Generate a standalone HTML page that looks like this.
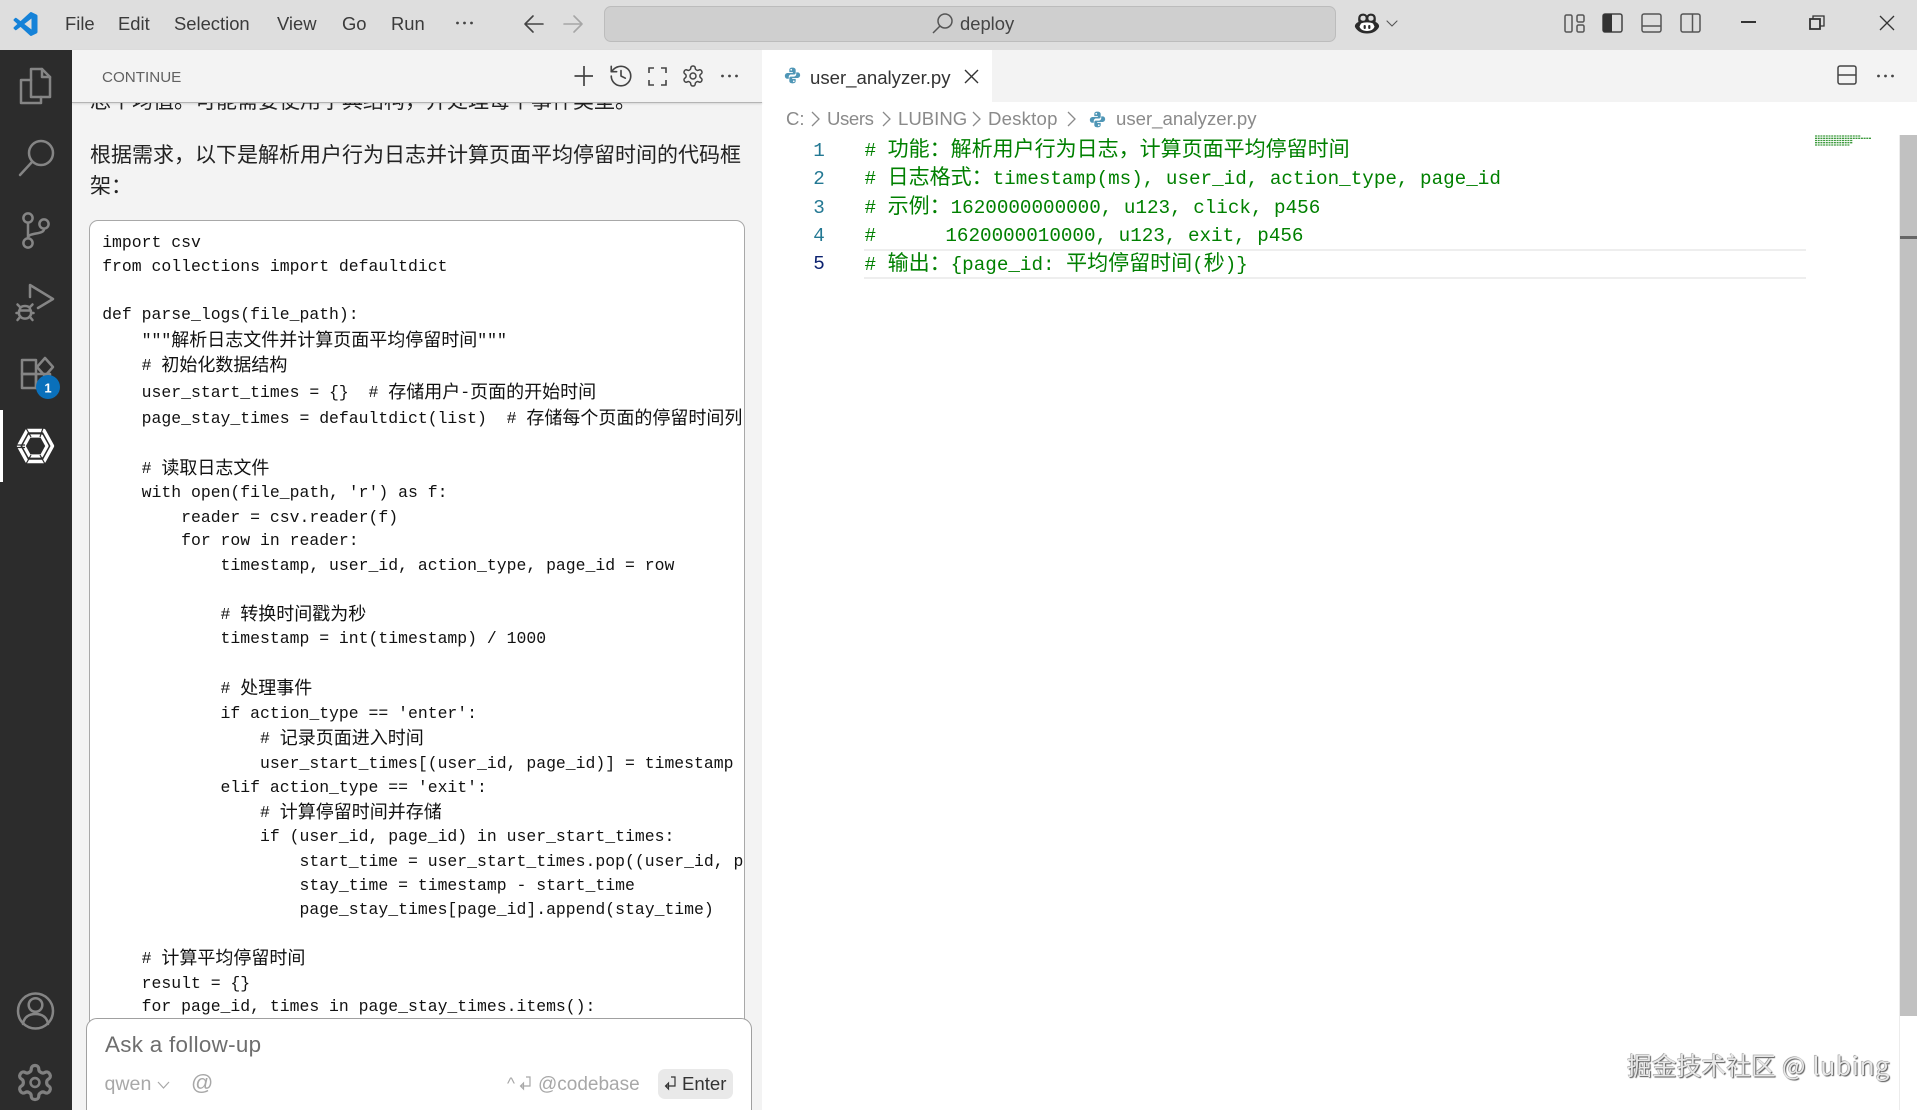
<!DOCTYPE html>
<html lang="zh-CN">
<head>
<meta charset="utf-8">
<title>user_analyzer.py</title>
<style>
html,body{margin:0;padding:0;width:1917px;height:1110px;overflow:hidden;background:#fff;}
body{position:relative;font-family:"Liberation Sans","Noto Sans CJK SC",sans-serif;color:#222;}
.a{position:absolute;white-space:pre;}
svg{position:absolute;overflow:visible;}
#title{position:absolute;left:0;top:0;width:1917px;height:50px;background:#dedede;}
.m{position:absolute;top:11px;line-height:26px;font-size:18.4px;color:#3b3b3b;}
#activity{position:absolute;left:0;top:50px;width:72px;height:1060px;background:#2c2c2c;}
#side{position:absolute;left:72px;top:50px;width:690px;height:1060px;background:#f3f3f3;overflow:hidden;}
#tabs{position:absolute;left:762px;top:50px;width:1155px;height:52px;background:#f3f3f3;}
#tab{position:absolute;left:762px;top:50px;width:230px;height:52px;background:#fff;}
#code{position:absolute;left:89px;top:220px;width:654px;height:900px;background:#fff;border:1px solid #a8a8a8;border-radius:9px;overflow:hidden;}
.l{position:absolute;left:12.2px;margin-top:.8px;line-height:24px;height:24px;white-space:pre;font-family:"Liberation Mono","Noto Sans CJK SC",monospace;font-size:16.45px;color:#111;}
.l i,.e i{font-style:normal;line-height:0;font-family:"Noto Sans CJK SC","Liberation Sans",sans-serif;}
.l i{font-size:18px;position:relative;top:1.2px;}
.e{position:absolute;left:864.5px;line-height:26px;height:26px;white-space:pre;font-family:"Liberation Mono","Noto Sans CJK SC",monospace;font-size:19.25px;color:#008000;}
.e i{font-size:21px;}
.n{position:absolute;left:808px;width:22px;text-align:center;line-height:26px;font-family:"Liberation Mono",monospace;font-size:19.25px;color:#237893;}
.b{position:absolute;top:107px;line-height:24px;font-size:18.6px;color:#8a8a8a;white-space:pre;}
.t{position:absolute;left:90px;font-size:21px;line-height:30px;color:#222;white-space:pre;font-family:"Noto Sans CJK SC","Liberation Sans",sans-serif;}
#input{position:absolute;left:86px;top:1018px;width:664px;height:110px;background:#fff;border:1px solid #a0a0a0;border-radius:11px;}
.g{fill:none;stroke:#858585;stroke-width:2.5;stroke-linecap:round;stroke-linejoin:round;}
.d{fill:none;stroke:#444;stroke-width:1.6;stroke-linecap:round;stroke-linejoin:round;}
</style>
</head>
<body>

<div id="title"></div>
<!-- VS Code logo -->
<svg style="left:13px;top:12px" width="25" height="24" viewBox="0 0 24 24"><path fill="#1582d8" d="M23.15 2.587L18.21.21a1.494 1.494 0 0 0-1.705.29l-9.46 8.63-4.12-3.128a.999.999 0 0 0-1.276.057L.327 7.261A1 1 0 0 0 .326 8.74L3.899 12 .326 15.26a1 1 0 0 0 .001 1.479L1.65 17.94a.999.999 0 0 0 1.276.057l4.12-3.128 9.46 8.63a1.492 1.492 0 0 0 1.704.29l4.942-2.377A1.5 1.5 0 0 0 24 20.06V3.939a1.5 1.5 0 0 0-.85-1.352zm-5.146 14.861L10.826 12l7.178-5.448v10.896z"/></svg>
<div class="m" style="left:65px">File</div>
<div class="m" style="left:118px">Edit</div>
<div class="m" style="left:174px">Selection</div>
<div class="m" style="left:277px">View</div>
<div class="m" style="left:342px">Go</div>
<div class="m" style="left:391px">Run</div>
<svg style="left:455px;top:20px" width="20" height="6"><circle cx="2.5" cy="3" r="1.4" fill="#444"/><circle cx="9.5" cy="3" r="1.4" fill="#444"/><circle cx="16.5" cy="3" r="1.4" fill="#444"/></svg>
<svg style="left:524px;top:14px" width="20" height="20" viewBox="0 0 20 20"><path class="d" d="M1 10H19M9 2L1 10L9 18"/></svg>
<svg style="left:563px;top:14px" width="20" height="20" viewBox="0 0 20 20"><path class="d" style="stroke:#a6a6a6" d="M1 10H19M11 2L19 10L11 18"/></svg>
<div style="position:absolute;left:604px;top:6px;width:730px;height:34px;background:#cfcfcf;border:1px solid #bcbcbc;border-radius:7px;"></div>
<svg style="left:932px;top:13px" width="21" height="21" viewBox="0 0 21 21"><circle cx="13" cy="8" r="7" fill="none" stroke="#555" stroke-width="1.5"/><path d="M8 13L1 20" stroke="#555" stroke-width="1.5" fill="none"/></svg>
<div class="a" style="left:960px;top:11px;line-height:26px;font-size:18.4px;color:#444">deploy</div>
<!-- Copilot -->
<svg style="left:1354px;top:13px" width="26" height="21" viewBox="0 0 26 21">
<path fill="#2b2b2b" d="M5 2.5C6 .5 10 0 12 1.5L13 2.5L14 1.5C16 0 20 .5 21 2.5C22 4 22 7 21.5 9C24 10 25.5 12 25 14C24 16 22 18 20 19C17 21 9 21 6 19C4 18 2 16 1 14C.5 12 2 10 4.5 9C4 7 4 4 5 2.5Z"/>
<path fill="#dedede" d="M7 3.5C8 2.5 10.5 2.5 11.2 3.5C12 5 11.6 7 10.5 7.5C9 8 7 7.6 6.6 6.5C6.3 5.5 6.4 4.2 7 3.5Z"/>
<path fill="#dedede" d="M19 3.5C18 2.5 15.5 2.5 14.8 3.5C14 5 14.4 7 15.5 7.5C17 8 19 7.6 19.4 6.5C19.7 5.5 19.6 4.2 19 3.5Z"/>
<path fill="#fff" d="M7 10.5C10 9 16 9 19 10.5L20.5 13.5C20 16 17 18 13 18C9 18 6 16 5.5 13.5Z"/>
<rect x="9.6" y="12" width="2.2" height="4" rx="1" fill="#2b2b2b"/><rect x="14.2" y="12" width="2.2" height="4" rx="1" fill="#2b2b2b"/>
</svg>
<svg style="left:1386px;top:20px" width="12" height="7" viewBox="0 0 12 7"><path class="d" style="stroke-width:1.1;stroke:#555" d="M1 1L6 6L11 1"/></svg>
<!-- layout icons -->
<svg style="left:1564px;top:14px" width="21" height="19" viewBox="0 0 21 19"><rect x="1" y="1" width="7" height="17" rx="1.5" fill="none" stroke="#555" stroke-width="1.5"/><rect x="13" y="1" width="7" height="7" rx="1.5" fill="none" stroke="#555" stroke-width="1.5"/><rect x="13" y="11" width="7" height="7" rx="1.5" fill="none" stroke="#555" stroke-width="1.5"/></svg>
<svg style="left:1602px;top:13px" width="21" height="20" viewBox="0 0 21 20"><rect x="1" y="1" width="19" height="18" rx="2" fill="none" stroke="#444" stroke-width="1.5"/><path d="M3 1H10V19H3C2 19 1 18 1 17V3C1 2 2 1 3 1Z" fill="#333"/></svg>
<svg style="left:1641px;top:13px" width="21" height="20" viewBox="0 0 21 20"><rect x="1" y="1" width="19" height="18" rx="2" fill="none" stroke="#555" stroke-width="1.5"/><path d="M1 13H20" stroke="#555" stroke-width="1.5"/></svg>
<svg style="left:1680px;top:13px" width="21" height="20" viewBox="0 0 21 20"><rect x="1" y="1" width="19" height="18" rx="2" fill="none" stroke="#555" stroke-width="1.5"/><path d="M12.5 1V19" stroke="#555" stroke-width="1.5"/></svg>
<div style="position:absolute;left:1741px;top:21px;width:15px;height:2px;background:#333"></div>
<svg style="left:1809px;top:15px" width="16" height="15" viewBox="0 0 16 15"><rect x="1" y="4" width="10" height="10" fill="none" stroke="#333" stroke-width="1.8"/><path d="M4 3.5V1H15V11H11.5" fill="none" stroke="#333" stroke-width="1.3"/></svg>
<svg style="left:1879px;top:15px" width="16" height="16" viewBox="0 0 16 16"><path d="M1 1L15 15M15 1L1 15" stroke="#333" stroke-width="1.3" fill="none"/></svg>

<!-- Activity bar -->
<div id="activity"></div>
<svg style="left:0;top:0" width="72" height="1110" viewBox="0 0 72 1110">
<path class="g" d="M31 69H42L50 77V97H31Z"/>
<path class="g" d="M42 69V77H50"/>
<path class="g" d="M31 80H21V103H41V97"/>
<circle class="g" cx="41" cy="153" r="12"/><path class="g" d="M32 162L20 175"/>
<circle class="g" cx="28" cy="218" r="4.6"/><circle class="g" cx="28" cy="243" r="4.6"/><circle class="g" cx="44" cy="224" r="4.6"/>
<path class="g" d="M28 223V238M44 229C44 235 28 232 28 238"/>
<path class="g" d="M30 297V285L53 299L38 308"/>
<path class="g" d="M20 309C20 305 30 305 30 309C31.5 311 31.5 315 30 316C28 319.5 22 319.5 20 316C18.5 315 18.5 311 20 309ZM20 310.5H30"/>
<path class="g" d="M17.5 304.5L20 307M32.5 304.5L30 307M16.5 313H19M33.5 313H31M17.5 320L20 317M32.5 320L30 317"/>
<rect class="g" x="22" y="360" width="14" height="14"/><rect class="g" x="22" y="374" width="14" height="14"/><rect class="g" x="36" y="374" width="14" height="14"/>
<path class="g" d="M45 358L53 367L45 376L37 367Z"/>
<circle cx="48" cy="387" r="12" fill="#0a70bb"/>
<text x="48" y="392.5" text-anchor="middle" font-family="Liberation Sans" font-weight="700" font-size="13" fill="#fff">1</text>
<rect x="0" y="410" width="3" height="72" fill="#fff"/>
<path d="M27 430.5H44L52.5 446L44 461.5H27L18.5 446Z" fill="none" stroke="#fff" stroke-width="3.4" stroke-linejoin="round"/>
<path d="M29.5 436H41.5L47 446L41.5 456H29.5L24 446Z" fill="none" stroke="#fff" stroke-width="3.2" stroke-linejoin="round"/>
<path d="M26 428L31 437M43 428L40 437M16 445H25M16 447.5H25M26 464L31 455M45 464L40 455" stroke="#2c2c2c" stroke-width="1.2"/>
<circle class="g" cx="35.5" cy="1011" r="17.5"/><circle class="g" cx="35.5" cy="1005" r="6.8"/><path class="g" d="M23 1024C24 1017 29 1014 35.5 1014C42 1014 47 1017 48 1024"/>
<g transform="translate(14.6,1062.1) scale(1.7)">
<path fill="none" stroke="#808080" stroke-width="1.9" stroke-linejoin="round" d="M12.22 2h-.44a2 2 0 0 0-2 2v.18a2 2 0 0 1-1 1.73l-.43.25a2 2 0 0 1-2 0l-.15-.08a2 2 0 0 0-2.73.73l-.22.38a2 2 0 0 0 .73 2.73l.15.1a2 2 0 0 1 1 1.72v.51a2 2 0 0 1-1 1.74l-.15.09a2 2 0 0 0-.73 2.73l.22.38a2 2 0 0 0 2.73.73l.15-.08a2 2 0 0 1 2 0l.43.25a2 2 0 0 1 1 1.73V20a2 2 0 0 0 2 2h.44a2 2 0 0 0 2-2v-.18a2 2 0 0 1 1-1.73l.43-.25a2 2 0 0 1 2 0l.15.08a2 2 0 0 0 2.73-.73l.22-.39a2 2 0 0 0-.73-2.73l-.15-.08a2 2 0 0 1-1-1.74v-.5a2 2 0 0 1 1-1.74l.15-.09a2 2 0 0 0 .73-2.73l-.22-.38a2 2 0 0 0-2.73-.73l-.15.08a2 2 0 0 1-2 0l-.43-.25a2 2 0 0 1-1-1.73V4a2 2 0 0 0-2-2z"/>
<circle cx="12" cy="12" r="2.6" fill="none" stroke="#808080" stroke-width="1.5"/>
</g>
</svg>

<!-- Sidebar -->
<div id="side"></div>
<div class="t" style="top:85px">总个均值。可能需要使用字典结构，并处理每个事件类型。</div>
<div class="t" style="top:139px">根据需求，以下是解析用户行为日志并计算页面平均停留时间的代码框</div>
<div class="t" style="top:170px">架：</div>

<div id="code">
<div class="l" style="top:9px">import csv</div>
<div class="l" style="top:33.5px">from collections import defaultdict</div>
<div class="l" style="top:81px">def parse_logs(file_path):</div>
<div class="l" style="top:107px">    """<i>解析日志文件并计算页面平均停留时间</i>"""</div>
<div class="l" style="top:132.5px">    # <i>初始化数据结构</i></div>
<div class="l" style="top:159.5px">    user_start_times = {}  # <i>存储用户</i>-<i>页面的开始时间</i></div>
<div class="l" style="top:185px">    page_stay_times = defaultdict(list)  # <i>存储每个页面的停留时间列</i></div>
<div class="l" style="top:235px">    # <i>读取日志文件</i></div>
<div class="l" style="top:259.7px">    with open(file_path, 'r') as f:</div>
<div class="l" style="top:284px">        reader = csv.reader(f)</div>
<div class="l" style="top:307px">        for row in reader:</div>
<div class="l" style="top:332px">            timestamp, user_id, action_type, page_id = row</div>
<div class="l" style="top:381px">            # <i>转换时间戳为秒</i></div>
<div class="l" style="top:405px">            timestamp = int(timestamp) / 1000</div>
<div class="l" style="top:455px">            # <i>处理事件</i></div>
<div class="l" style="top:480px">            if action_type == 'enter':</div>
<div class="l" style="top:505px">                # <i>记录页面进入时间</i></div>
<div class="l" style="top:530px">                user_start_times[(user_id, page_id)] = timestamp</div>
<div class="l" style="top:554px">            elif action_type == 'exit':</div>
<div class="l" style="top:579px">                # <i>计算停留时间并存储</i></div>
<div class="l" style="top:603px">                if (user_id, page_id) in user_start_times:</div>
<div class="l" style="top:628px">                    start_time = user_start_times.pop((user_id, page_id))</div>
<div class="l" style="top:652px">                    stay_time = timestamp - start_time</div>
<div class="l" style="top:676.5px">                    page_stay_times[page_id].append(stay_time)</div>
<div class="l" style="top:725px">    # <i>计算平均停留时间</i></div>
<div class="l" style="top:750px">    result = {}</div>
<div class="l" style="top:773px">    for page_id, times in page_stay_times.items():</div>
</div>

<!-- Sidebar header (covers scrolled text) -->
<div style="position:absolute;left:72px;top:50px;width:690px;height:52px;background:#f3f3f3;border-bottom:1px solid #b4b4b4;box-shadow:0 1px 2px rgba(0,0,0,.12)"></div>
<div class="a" style="left:102px;top:65.5px;line-height:24px;font-size:15.2px;color:#616161">CONTINUE</div>
<svg style="left:575px;top:65px" width="160" height="24" viewBox="575 65 160 24">
<path d="M584 66V86M574.5 76H593" stroke="#444" stroke-width="1.7" fill="none"/>
</svg>
<svg style="left:608px;top:63px" width="26" height="26" viewBox="0 0 24 24"><g fill="none" stroke="#444" stroke-width="1.5" stroke-linecap="round" stroke-linejoin="round"><path d="M3 12a9 9 0 1 0 9-9 9.75 9.75 0 0 0-6.74 2.74L3 8"/><path d="M3 3v5h5"/><path d="M12 7v5l4 2"/></g></svg>
<svg style="left:648px;top:67px" width="19" height="19" viewBox="0 0 19 19"><path d="M1 6V1H6M13 1H18V6M18 13V18H13M6 18H1V13" fill="none" stroke="#444" stroke-width="1.6"/></svg>
<svg style="left:681px;top:64px" width="24" height="24" viewBox="0 0 24 24"><path fill="none" stroke="#444" stroke-width="1.5" stroke-linejoin="round" d="M12.22 2h-.44a2 2 0 0 0-2 2v.18a2 2 0 0 1-1 1.73l-.43.25a2 2 0 0 1-2 0l-.15-.08a2 2 0 0 0-2.73.73l-.22.38a2 2 0 0 0 .73 2.73l.15.1a2 2 0 0 1 1 1.72v.51a2 2 0 0 1-1 1.74l-.15.09a2 2 0 0 0-.73 2.73l.22.38a2 2 0 0 0 2.73.73l.15-.08a2 2 0 0 1 2 0l.43.25a2 2 0 0 1 1 1.73V20a2 2 0 0 0 2 2h.44a2 2 0 0 0 2-2v-.18a2 2 0 0 1 1-1.73l.43-.25a2 2 0 0 1 2 0l.15.08a2 2 0 0 0 2.73-.73l.22-.39a2 2 0 0 0-.73-2.73l-.15-.08a2 2 0 0 1-1-1.74v-.5a2 2 0 0 1 1-1.74l.15-.09a2 2 0 0 0 .73-2.73l-.22-.38a2 2 0 0 0-2.73-.73l-.15.08a2 2 0 0 1-2 0l-.43-.25a2 2 0 0 1-1-1.73V4a2 2 0 0 0-2-2z"/><circle cx="12" cy="12" r="3" fill="none" stroke="#444" stroke-width="1.5"/></svg>
<svg style="left:720px;top:73px" width="20" height="6"><circle cx="2.5" cy="3" r="1.4" fill="#444"/><circle cx="9.5" cy="3" r="1.4" fill="#444"/><circle cx="16.5" cy="3" r="1.4" fill="#444"/></svg>

<!-- Input -->
<div id="input"></div>
<div class="a" style="left:105px;top:1030px;line-height:30px;font-size:22.4px;letter-spacing:.3px;color:#6e6e6e">Ask a follow-up</div>
<div class="a" style="left:104.5px;top:1072px;line-height:24px;font-size:19.6px;color:#a8a8a8">qwen</div>
<svg style="left:157px;top:1081px" width="13" height="8" viewBox="0 0 13 8"><path d="M1 1L6.5 7L12 1" fill="none" stroke="#a8a8a8" stroke-width="1.2"/></svg>
<div class="a" style="left:191px;top:1071px;line-height:24px;font-size:22px;color:#a8a8a8">@</div>
<div class="a" style="left:507px;top:1072px;line-height:24px;font-size:17px;color:#a8a8a8">^</div>
<svg style="left:519px;top:1076px" width="12" height="15" viewBox="0 0 12 15"><path d="M7 1H11V10H1.5M4.5 7L1.5 10L4.5 13Z" fill="none" stroke="#a8a8a8" stroke-width="1.2"/></svg>
<div class="a" style="left:538px;top:1073px;line-height:24px;font-size:19px;color:#a8a8a8">@codebase</div>
<div style="position:absolute;left:658px;top:1069px;width:75px;height:30px;background:#e9e9e9;border-radius:7px"></div>
<svg style="left:664px;top:1076px" width="12" height="15" viewBox="0 0 12 15"><path d="M7 1H11V10H1.5M4.5 7L1.5 10L4.5 13Z" fill="none" stroke="#333" stroke-width="1.2"/></svg>
<div class="a" style="left:682px;top:1072px;line-height:24px;font-size:18.6px;color:#333">Enter</div>

<!-- Tabs -->
<div id="tabs"></div>
<div id="tab"></div>
<svg style="left:784px;top:67px" width="17" height="17" viewBox="0 0 16 16"><g fill="#4f96b6"><path d="M8 .6C5.6.6 5 1.6 5 2.8V4.8H8.3V5.6H3.4C2 5.6 .8 6.7 .8 8.3C.8 9.9 1.8 11 3.1 11H4.5V9.2C4.5 8 5.5 7 6.7 7H9.7C10.6 7 11 6.2 11 5.4V2.8C11 1.4 9.8.6 8 .6Z"/><path d="M8 15.4C10.4 15.4 11 14.4 11 13.2V11.2H7.7V10.4H12.6C14 10.4 15.2 9.3 15.2 7.7C15.2 6.1 14.2 5 12.9 5H11.5V6.8C11.5 8 10.5 9 9.3 9H6.3C5.4 9 5 9.8 5 10.6V13.2C5 14.6 6.2 15.4 8 15.4Z"/></g><circle cx="6.8" cy="2.6" r=".8" fill="#fff"/><circle cx="9.2" cy="13.4" r=".8" fill="#fff"/></svg>
<div class="a" style="left:810px;top:65px;line-height:26px;font-size:18.6px;color:#333">user_analyzer.py</div>
<svg style="left:964px;top:69px" width="15" height="15" viewBox="0 0 15 15"><path d="M1 1L14 14M14 1L1 14" stroke="#333" stroke-width="1.4" fill="none"/></svg>
<svg style="left:1837px;top:65px" width="21" height="20" viewBox="0 0 21 20"><rect x="1" y="1" width="18" height="18" rx="2" fill="none" stroke="#444" stroke-width="1.5"/><path d="M1 10H19" stroke="#444" stroke-width="1.5"/></svg>
<svg style="left:1876px;top:73px" width="20" height="6"><circle cx="2.5" cy="3" r="1.4" fill="#444"/><circle cx="9.5" cy="3" r="1.4" fill="#444"/><circle cx="16.5" cy="3" r="1.4" fill="#444"/></svg>

<!-- Breadcrumbs -->
<div class="b" style="left:786px">C:</div>
<div class="b" style="left:827px;letter-spacing:-.4px">Users</div>
<div class="b" style="left:898px">LUBING</div>
<div class="b" style="left:988px;letter-spacing:.2px">Desktop</div>
<div class="b" style="left:1116px">user_analyzer.py</div>
<svg style="left:811px;top:111px" width="270" height="16" viewBox="0 0 270 16"><g fill="none" stroke="#8a8a8a" stroke-width="1.3"><path d="M1 1L8 8L1 15"/><path d="M72 1L79 8L72 15"/><path d="M162 1L169 8L162 15"/><path d="M257 1L264 8L257 15"/></g></svg>
<svg style="left:1089px;top:111px" width="17" height="17" viewBox="0 0 16 16"><g fill="#4f96b6"><path d="M8 .6C5.6.6 5 1.6 5 2.8V4.8H8.3V5.6H3.4C2 5.6 .8 6.7 .8 8.3C.8 9.9 1.8 11 3.1 11H4.5V9.2C4.5 8 5.5 7 6.7 7H9.7C10.6 7 11 6.2 11 5.4V2.8C11 1.4 9.8.6 8 .6Z"/><path d="M8 15.4C10.4 15.4 11 14.4 11 13.2V11.2H7.7V10.4H12.6C14 10.4 15.2 9.3 15.2 7.7C15.2 6.1 14.2 5 12.9 5H11.5V6.8C11.5 8 10.5 9 9.3 9H6.3C5.4 9 5 9.8 5 10.6V13.2C5 14.6 6.2 15.4 8 15.4Z"/></g><circle cx="6.8" cy="2.6" r=".8" fill="#fff"/><circle cx="9.2" cy="13.4" r=".8" fill="#fff"/></svg>

<!-- Editor -->
<div style="position:absolute;left:864px;top:249px;width:942px;height:26px;border:2px solid #eeeeee;border-left:0;border-right:0"></div>
<div class="n" style="top:138px">1</div>
<div class="n" style="top:166px">2</div>
<div class="n" style="top:195px">3</div>
<div class="n" style="top:223px">4</div>
<div class="n" style="top:251px;color:#0b216f">5</div>
<div class="e" style="top:138px"># <i>功能：解析用户行为日志，计算页面平均停留时间</i></div>
<div class="e" style="top:166px"># <i>日志格式：</i>timestamp(ms), user_id, action_type, page_id</div>
<div class="e" style="top:195px"># <i>示例：</i>1620000000000, u123, click, p456</div>
<div class="e" style="top:222.5px">#      1620000010000, u123, exit, p456</div>
<div class="e" style="top:252px"># <i>输出：</i>{page_id: <i>平均停留时间</i>(<i>秒</i>)}</div>

<!-- Minimap -->
<svg style="left:1815px;top:135px" width="56" height="11" viewBox="0 0 56 11"><g stroke="#3c9a3c" stroke-width="1.3" stroke-dasharray="2 .7" fill="none"><path d="M0 1H46"/><path d="M0 3.3H56"/><path d="M0 5.5H38"/><path d="M0 7.7H38"/><path d="M0 10H35"/></g></svg>

<!-- Scrollbar -->
<div style="position:absolute;left:1899px;top:135px;width:1px;height:975px;background:#ececec"></div>
<div style="position:absolute;left:1900px;top:135px;width:17px;height:881px;background:#c1c1c1"></div>
<div style="position:absolute;left:1900px;top:236px;width:17px;height:3px;background:#666"></div>

<!-- Watermark -->
<div class="a" style="left:1627px;top:1049px;line-height:32px;font-size:24.8px;color:#e8e8e8;text-shadow:1px 1px 1px #555,-.5px -.5px .5px #888;font-family:'Noto Sans CJK SC','Liberation Sans',sans-serif">掘金技术社区<span style="letter-spacing:.7px"> @ lubing</span></div>

</body>
</html>
